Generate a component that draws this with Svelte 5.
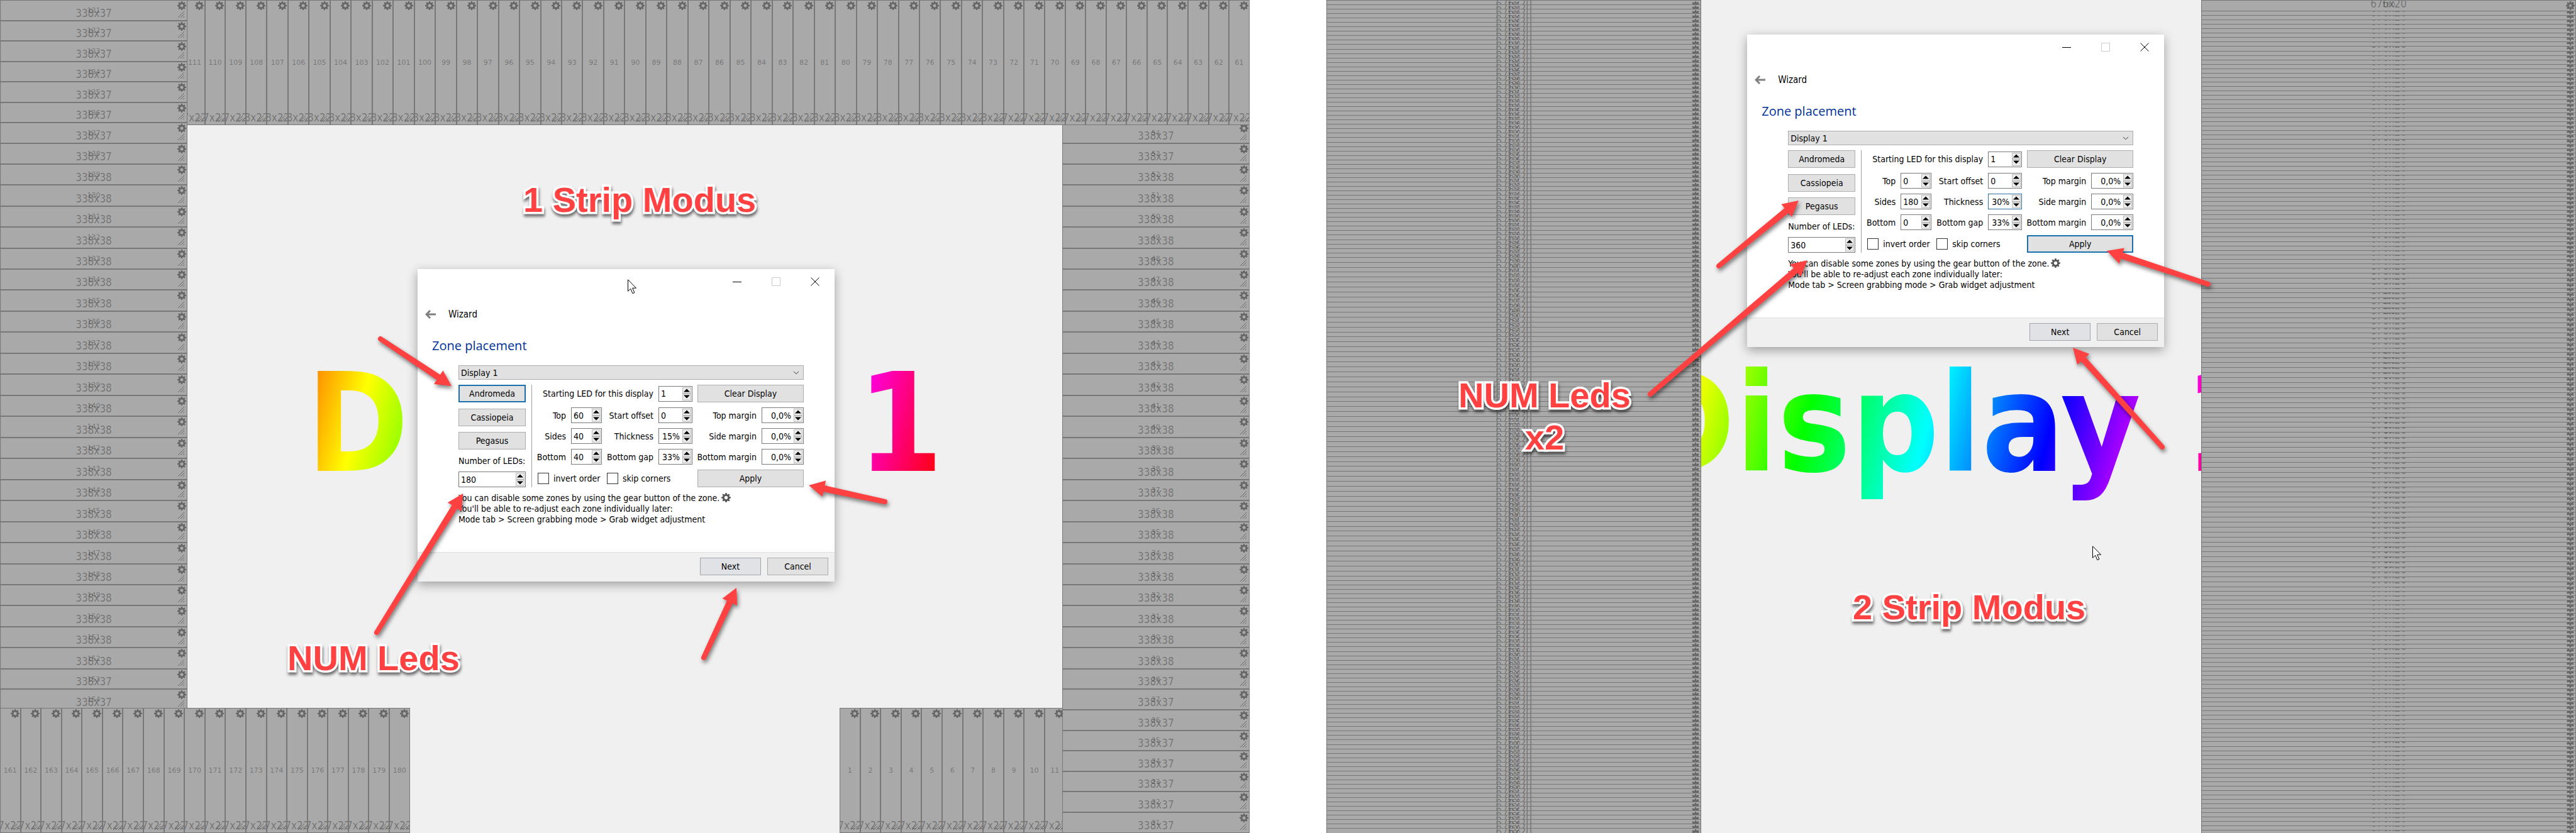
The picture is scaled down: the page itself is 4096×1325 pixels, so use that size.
<script>
  const span = (from, to) => Array.from({ length: to - from + 1 }, (_, i) => from + i);

  // The middle zones of a row are one pixel larger than those at its ends.
  const sized = (numbers, small, edge) =>
    numbers.map((n, i) => ({
      n,
      size: i < edge || i >= numbers.length - edge ? small : small + 1
    }));

  const topZones = sized(span(61, 120), 37, 12);
  const rightZones = sized(span(21, 60), 37, 8);
  const leftZones = sized(span(121, 160), 37, 8);
  const startZones = sized(span(1, 20), 37, 20);
  const endZones = sized(span(161, 180), 37, 20);
  const sideUp = sized(span(1, 180), 8, 58);
  const sideDown = sized(span(181, 360), 8, 58);

  const wizards = [
    {
      id: 'one', leds: '180', start: '1', offset: '0', top: '60', sides: '40', bottom: '40',
      thickness: '15%', gap: '33%', primary: 'Andromeda', focused: ''
    },
    {
      id: 'two', leds: '360', start: '1', offset: '0', top: '0', sides: '180', bottom: '0',
      thickness: '30%', gap: '33%', primary: 'Apply', focused: 'thickness'
    }
  ];

  const presets = ['Andromeda', 'Cassiopeia', 'Pegasus'];

  // Tail and tip of every annotation arrow.
  const arrows = [
    [605, 539, 718, 614],
    [1407, 798, 1286, 772],
    [599, 1006, 736, 785],
    [1119, 1046, 1171, 935],
    [2733, 423, 2860, 319],
    [2624, 627, 2874, 414],
    [3511, 452, 3350, 399],
    [3438, 711, 3296, 553]
  ].map(([x1, y1, x2, y2]) => {
    const length = Math.hypot(x2 - x1, y2 - y1);
    return { x: x2, y: y2, length, angle: (Math.atan2(y2 - y1, x2 - x1) * 180) / Math.PI };
  });

  const teeth = [0, 45, 90, 135, 180, 225, 270, 315];
</script>

{#snippet gearIcon()}
  <svg viewBox="0 0 16 16" aria-hidden="true">
    <circle cx="8" cy="8" r="4.4" fill="none" stroke="currentColor" stroke-width="3" />
    {#each teeth as t}
      <path d="M6.3 3 6.9 0h2.2l.6 3z" fill="currentColor" transform="rotate({t} 8 8)" />
    {/each}
  </svg>
{/snippet}

{#snippet zone(z, label)}
  <div class="zone">
    <span class="number">{z.n}</span>
    <span class="size">{label}</span>
    <button class="gear" aria-label="Zone {z.n} settings">{@render gearIcon()}</button>
    <svg class="grip" viewBox="0 0 10 10" aria-hidden="true">
      <path d="M0 10 10 0M4 10 10 4M8 10 10 8" fill="none" stroke="#6a6a6a" stroke-width="1" />
    </svg>
  </div>
{/snippet}

{#snippet strip(zones, kind, label)}
  <div class="strip {kind}">
    {#each zones as z (z.n)}
      <div class="slot" style:flex-grow={z.size}>{@render zone(z, label(z))}</div>
    {/each}
  </div>
{/snippet}

{#snippet spin(id, value, kind)}
  <span class="spin {kind}">
    <input {id} type="text" {value} />
    <span class="steps">
      <button aria-label="Increase"><svg viewBox="0 0 10 6"><path d="M0 5.500 5 .5l5 5z" /></svg></button>
      <button aria-label="Decrease"><svg viewBox="0 0 10 6"><path d="M0 .5l5 5 5-5z" /></svg></button>
    </span>
  </span>
{/snippet}

{#snippet wizard(w)}
  <section class="wizard {w.id}">
    <div class="titlebar">
      <button aria-label="Minimize"><svg viewBox="0 0 14 14"><path d="M0 7.500h14" /></svg></button>
      <button class="dim" aria-label="Maximize"><svg viewBox="0 0 14 14"><path d="M.5.5h13v13H.5z" /></svg></button>
      <button aria-label="Close"><svg viewBox="0 0 14 14"><path d="m.5.5 13 13m0-13-13 13" /></svg></button>
    </div>
    <header>
      <button class="back" aria-label="Back">
        <svg viewBox="0 0 17 14"><path d="M17 7H2M8 1 2 7l6 6" /></svg>
      </button>
      <span>Wizard</span>
    </header>
    <h2>Zone placement</h2>

    <div class="body">
      <div class="combo">
        <select aria-label="Display"><option>Display 1</option></select>
        <svg viewBox="0 0 10 6" aria-hidden="true"><path d="m1 .8 4 4 4-4" /></svg>
      </div>

      <div class="columns">
        <div class="presets">
          {#each presets as p}
            <button class="push" class:primary={w.primary === p}>{p}</button>
          {/each}
          <label for="{w.id}-leds">Number of LEDs:</label>
          {@render spin(w.id + '-leds', w.leds, '')}
        </div>
        <div class="rule"></div>
        <div class="fields">
          <label class="wide" for="{w.id}-start">Starting LED for this display</label>
          {@render spin(w.id + '-start', w.start, '')}
          <button class="push double">Clear Display</button>

          <label for="{w.id}-top">Top</label>
          {@render spin(w.id + '-top', w.top, '')}
          <label for="{w.id}-offset">Start offset</label>
          {@render spin(w.id + '-offset', w.offset, '')}
          <label for="{w.id}-mt">Top margin</label>
          {@render spin(w.id + '-mt', '0,0%', 'right')}

          <label for="{w.id}-sides">Sides</label>
          {@render spin(w.id + '-sides', w.sides, '')}
          <label for="{w.id}-thick">Thickness</label>
          {@render spin(w.id + '-thick', w.thickness, w.focused === 'thickness' ? 'right focused' : 'right')}
          <label for="{w.id}-ms">Side margin</label>
          {@render spin(w.id + '-ms', '0,0%', 'right')}

          <label for="{w.id}-bottom">Bottom</label>
          {@render spin(w.id + '-bottom', w.bottom, '')}
          <label for="{w.id}-gap">Bottom gap</label>
          {@render spin(w.id + '-gap', w.gap, 'right')}
          <label for="{w.id}-mb">Bottom margin</label>
          {@render spin(w.id + '-mb', '0,0%', 'right')}

          <label class="check"><input type="checkbox" /> invert order</label>
          <label class="check"><input type="checkbox" /> skip corners</label>
          <button class="push double" class:primary={w.primary === 'Apply'}>Apply</button>
        </div>
      </div>

      <p>
        You can disable some zones by using the gear button of the zone.<span class="inline-gear">{@render gearIcon()}</span><br />
        You'll be able to re-adjust each zone individually later:<br />
        Mode tab &gt; Screen grabbing mode &gt; Grab widget adjustment
      </p>
    </div>

    <footer>
      <button class="push next">Next</button>
      <button class="push">Cancel</button>
    </footer>
  </section>
{/snippet}

{#snippet pointer()}
  <svg class="pointer" viewBox="0 0 15 24" aria-hidden="true">
    <path d="M.5.8v18.500l4.200-4.100 3.200 7.600 3-1.300-3.200-7.300h5.800z" fill="#fff" stroke="#000" />
  </svg>
{/snippet}

<main>
  <div class="screen first">
    <h1 class="display">Display 1</h1>
    {@render strip(startZones, 'across at-bottom from-gap', () => '37x225')}
    {@render strip(rightZones, 'down reverse at-right', (z) => '338x' + z.size)}
    {@render strip(topZones, 'across reverse at-top', (z) => z.size + 'x225')}
    {@render strip(leftZones, 'down at-left', (z) => '338x' + z.size)}
    {@render strip(endZones, 'across at-bottom', () => '37x225')}
    {@render wizard(wizards[0])}
    {@render pointer()}
  </div>

  <div class="screen second">
    <h1 class="display">Display 1</h1>
    {@render strip(sideDown, 'down thin at-left', () => '676x20')}
    {@render strip(sideUp, 'down thin reverse at-right', () => '676x20')}
    {@render wizard(wizards[1])}
    {@render pointer()}
  </div>

  <svg class="arrows" aria-hidden="true">
    {#each arrows as a}
      <g transform="translate({a.x} {a.y}) rotate({a.angle})">
        <path d="M{-a.length} -4a4 4 0 0 0 0 8L-25 5v8L0 0-25 -13v8z" fill="#ff4141" />
      </g>
    {/each}
  </svg>

  <div class="note one-strip">1 Strip Modus</div>
  <div class="note leds">NUM Leds</div>
  <div class="note leds-double">NUM Leds<br />x2</div>
  <div class="note two-strip">2 Strip Modus</div>
</main>

<style>
  :global(body) {
    margin: 0;
    background: #fff;
  }

  main {
    position: relative;
    display: grid;
    grid-template-columns: 2256fr 139fr 2256fr;
    overflow: hidden;
    font-family: 'DejaVu Sans Condensed', 'DejaVu Sans', sans-serif;
    font-size: 14px;
    color: #000;
  }

  button {
    font: inherit;
    color: inherit;
    padding: 0;
    border: 0;
    background: none;
  }

  svg {
    display: block;
  }

  .screen {
    position: relative;
    display: grid;
    grid-template: minmax(0, 1fr) / minmax(0, 1fr);
    aspect-ratio: 2256 / 1504;
    overflow: hidden;
    background: #f0f0f0;
  }

  .screen > * {
    grid-area: 1 / 1;
  }

  .second {
    grid-column: 3;
  }

  .display {
    place-self: center;
    margin: 0;
    padding-top: 24px;
    font-size: 218px;
    font-weight: bold;
    line-height: 250px;
    white-space: nowrap;
    color: transparent;
    background: linear-gradient(105deg, #f00 -7%, #ff0 11%, #0f0 29%, #0ff 47%, #00f 65%, #f0f 82%, #f00 99%);
    background-clip: text;
    -webkit-background-clip: text;
  }

  /* zones */
  .strip {
    display: flex;
    min-width: 0;
    min-height: 0;
  }

  .down {
    flex-direction: column;
    width: 15%;
  }

  .down.reverse {
    flex-direction: column-reverse;
  }

  .across.reverse {
    flex-direction: row-reverse;
  }

  .thin {
    width: 30%;
  }

  .at-left {
    justify-self: start;
  }

  .at-right {
    justify-self: end;
  }

  .at-top {
    height: 15%;
    align-self: start;
  }

  .at-bottom {
    width: calc(100% * 740 / 2256);
    height: 15%;
    place-self: end start;
  }

  .at-bottom.from-gap {
    justify-self: end;
  }

  .slot {
    display: flex;
    flex: 1 1 0;
    min-width: 0;
    min-height: 0;
  }

  .thin .slot {
    position: relative;
    align-items: flex-start;
  }

  .thin .zone {
    height: 18px;
  }

  .zone {
    display: grid;
    flex: 1;
    grid-template: minmax(0, 1fr) / minmax(0, 1fr);
    box-sizing: border-box;
    min-width: 0;
    overflow: hidden;
    border: 1px solid #777;
    background: #a9a9a9;
    color: rgba(0, 0, 0, 0.32);
    white-space: nowrap;
  }

  .zone > * {
    grid-area: 1 / 1;
  }

  .number {
    place-self: center;
    font: 11px/13px 'DejaVu Sans', sans-serif;
  }

  .thin .number {
    padding-bottom: 4px;
  }

  .size {
    place-self: end center;
    padding-bottom: 1px;
    font-size: 17px;
    line-height: 20px;
  }

  .gear {
    place-self: start end;
    width: 14px;
    height: 14px;
    margin: 1px 1px 0 0;
    color: #666;
  }

  .grip {
    place-self: end;
    width: 10px;
    height: 10px;
    margin: 0 4px 4px 0;
  }

  /* wizard window */
  .wizard {
    position: absolute;
    left: 664px;
    top: 428px;
    display: flex;
    flex-direction: column;
    width: 663px;
    background: #fff;
    box-shadow: 0 5px 16px rgba(0, 0, 0, 0.35);
  }

  .wizard.two {
    left: 669px;
    top: 55px;
  }

  .titlebar {
    display: flex;
    justify-content: flex-end;
    height: 40px;
  }

  .titlebar button {
    display: grid;
    place-items: center;
    width: 62px;
  }

  .titlebar svg {
    width: 14px;
    height: 14px;
    fill: none;
    stroke: #000;
    overflow: visible;
  }

  .titlebar .dim svg {
    stroke: #ccc;
  }

  header {
    display: flex;
    align-items: center;
    gap: 20px;
    padding: 20px 12px 0;
    font-size: 15px;
    line-height: 24px;
  }

  .back svg {
    width: 17px;
    height: 14px;
    fill: none;
    stroke: #808080;
    stroke-width: 3;
  }

  h2 {
    margin: 24px 23px 0;
    font: 20px/28px 'Open Sans', sans-serif;
    color: #003399;
  }

  .body {
    padding: 17px 49px 43px 65px;
  }

  .combo {
    display: grid;
    align-items: center;
  }

  .combo > * {
    grid-area: 1 / 1;
  }

  .combo select {
    appearance: none;
    width: 100%;
    height: 23px;
    padding: 0 3px;
    border: 1px solid #adadad;
    border-radius: 0;
    background: #e1e1e1;
    font: inherit;
    color: inherit;
  }

  .combo svg {
    justify-self: end;
    width: 10px;
    height: 6px;
    margin-right: 7px;
    fill: none;
    stroke: #333;
    pointer-events: none;
  }

  .columns {
    display: flex;
    gap: 9px;
    margin-top: 8px;
  }

  .presets {
    display: flex;
    flex-direction: column;
    justify-content: space-between;
    width: 107px;
  }

  .presets label {
    line-height: 16px;
    white-space: nowrap;
  }

  .rule {
    width: 1px;
    background: #a0a0a0;
  }

  .fields {
    display: grid;
    flex: 1;
    grid-template-columns: 45px 49px 74px 54px 94px 1fr;
    gap: 8px;
    align-items: center;
  }

  .fields label {
    text-align: right;
    white-space: nowrap;
    justify-self: end;
  }

  .fields .wide {
    grid-column: span 3;
  }

  .fields .double {
    grid-column: span 2;
  }

  .fields .check {
    display: flex;
    grid-column: span 2;
    justify-self: start;
    align-items: center;
    gap: 7px;
  }

  .check input {
    appearance: none;
    box-sizing: border-box;
    width: 18px;
    height: 18px;
    margin: 0;
    border: 1px solid #333;
    background: #fff;
  }

  .push {
    box-sizing: border-box;
    height: 28px;
    border: 1px solid #adadad;
    background: #e1e1e1;
  }

  .push.primary {
    border: 2px solid #1a6fb0;
  }

  .spin {
    display: flex;
    box-sizing: border-box;
    height: 25px;
    padding: 1px;
    border: 1px solid #7a7a7a;
    background: #fff;
  }

  .spin.focused {
    border-color: #2a6fa8;
  }

  .spin input {
    flex: 1;
    width: 0;
    padding: 0 0 0 2px;
    border: 0;
    outline: 0;
    background: none;
    font: inherit;
    color: inherit;
  }

  .spin.right input {
    padding: 0 4px 0 0;
    text-align: right;
  }

  .steps {
    display: flex;
    flex-direction: column;
    width: 14px;
  }

  .steps button {
    display: grid;
    flex: 1;
    place-items: center;
    border: 1px solid #bcbcbc;
    background: #ececec;
  }

  .steps svg {
    width: 10px;
    height: 6px;
  }

  p {
    margin: 9px 0 0;
    line-height: 17px;
    white-space: nowrap;
  }

  .inline-gear {
    display: inline-block;
    width: 15px;
    height: 15px;
    margin-left: 3px;
    vertical-align: -2px;
    color: #555;
  }

  footer {
    display: flex;
    justify-content: flex-end;
    gap: 10px;
    padding: 8px 10px 10px;
    border-top: 1px solid #dfdfdf;
    background: #f0f0f0;
  }

  footer .push {
    width: 97px;
  }

  footer .next {
    border-color: #9fa6ad;
    background: #e0e2e5;
  }

  /* annotations */
  .pointer {
    position: absolute;
    left: 998px;
    top: 444px;
    width: 15px;
    height: 24px;
  }

  .second .pointer {
    left: 1218px;
    top: 868px;
  }

  .arrows {
    position: absolute;
    inset: 0;
    width: 100%;
    height: 100%;
    pointer-events: none;
    filter: drop-shadow(2px 4px 3px rgba(0, 0, 0, 0.5));
  }

  .note {
    position: absolute;
    font: bold 56px/67px 'Liberation Sans', sans-serif;
    color: #ff4141;
    text-align: center;
    white-space: nowrap;
    -webkit-text-stroke: 7px #fff;
    paint-order: stroke fill;
    filter: drop-shadow(1px 4px 2px rgba(0, 0, 0, 0.55));
  }

  .one-strip {
    left: 832px;
    top: 284px;
  }

  .leds {
    left: 457px;
    top: 1013px;
  }

  .leds-double {
    left: 2319px;
    top: 595px;
  }

  .two-strip {
    left: 2946px;
    top: 932px;
  }
</style>
